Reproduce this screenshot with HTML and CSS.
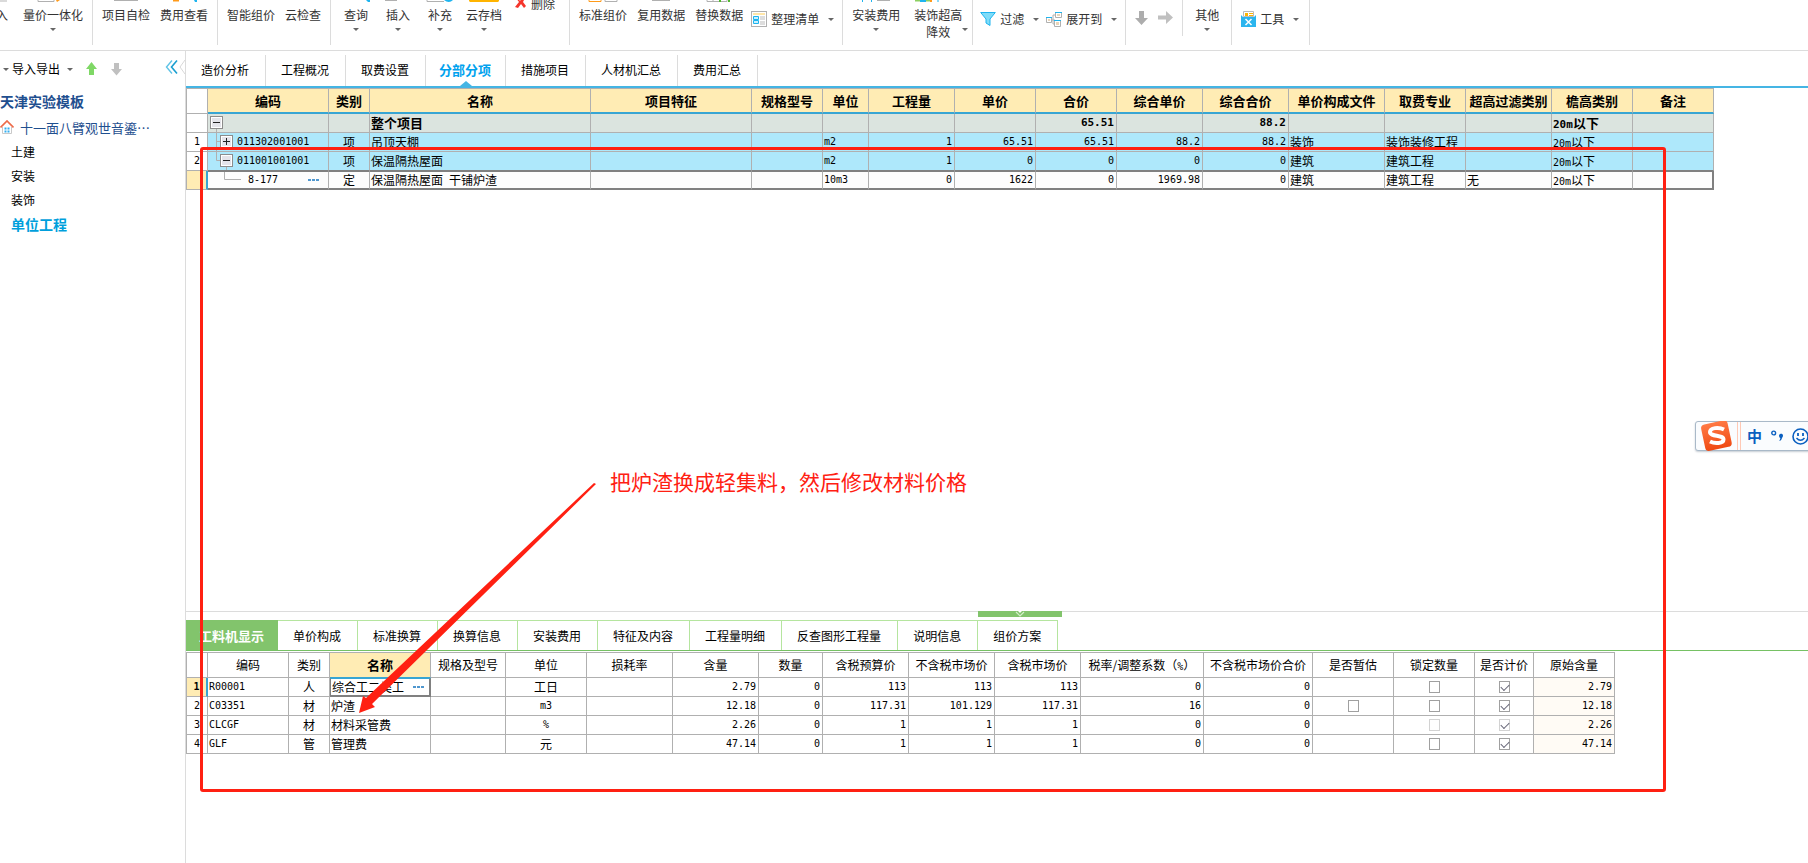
FILE: index.html
```html
<!DOCTYPE html>
<html lang="zh-CN">
<head>
<meta charset="utf-8">
<title>工程计价 - 分部分项</title>
<link rel="stylesheet" href="styles.css">
</head>
<body>
<header class="ribbon">
  <div class="group">
    <button class="tool cut"><svg class="top" width="14" height="4"><path d="M0 1h13" stroke="#b5b5b5" stroke-width="1"/></svg><span>入</span></button>
    <button class="tool"><svg class="top" width="32" height="4"><path d="M1 0v1.500h16V0" fill="none" stroke="#b0b0b0"/><path d="M19 0h4l-3 2z" fill="#ff9a1a"/></svg><span>量价一体化</span><i class="caret"></i></button>
  </div>
  <div class="group">
    <button class="tool"><svg class="top" width="24" height="4"><path d="M0 .5h24" stroke="#b0b0b0"/></svg><span>项目自检</span></button>
    <button class="tool"><svg class="top" width="26" height="4"><path d="M2 0h6v1.500H2z" fill="#ff9a1a"/><path d="M23 0h3v2h-2z" fill="#1eb4ef"/></svg><span>费用查看</span></button>
  </div>
  <div class="group">
    <button class="tool"><span class="top"></span><span>智能组价</span></button>
    <button class="tool"><span class="top"></span><span>云检查</span></button>
  </div>
  <div class="group">
    <button class="tool"><svg class="top" width="28" height="4"><path d="M24 0h4v2h-2z" fill="#1eb4ef"/></svg><span>查询</span><i class="caret"></i></button>
    <button class="tool"><svg class="top" width="28" height="4"><path d="M1 0h12v1H1z" fill="#b0b0b0"/></svg><span>插入</span><i class="caret"></i></button>
    <button class="tool"><svg class="top" width="30" height="4"><path d="M2 0v1.500h17" fill="none" stroke="#b0b0b0"/><path d="M19 0h9q-4 4-9 0z" fill="#1eb4ef"/></svg><span>补充</span><i class="caret"></i></button>
    <button class="tool"><svg class="top" width="30" height="4"><path d="M0 0h30v1l-1 1H1L0 1z" fill="#ffb400"/></svg><span>云存档</span><i class="caret"></i></button>
    <button class="tool delete"><svg width="12" height="12" viewBox="0 0 12 12"><path d="M2 0l3 4-4 5 3 1 3-4 3 4 2-2-3-4 2-4H8L6 3 4 0z" fill="#f5352b"/></svg><span>删除</span></button>
  </div>
  <div class="group">
    <button class="tool"><svg class="top" width="30" height="4"><path d="M1 0v1.500h12V0" fill="none" stroke="#ff9a1a"/><path d="M17 0v1.500h12V0" fill="none" stroke="#b0b0b0"/></svg><span>标准组价</span></button>
    <button class="tool"><svg class="top" width="18" height="4"><path d="M0 .5h18" stroke="#b0b0b0"/></svg><span>复用数据</span></button>
    <button class="tool"><svg class="top" width="30" height="4"><path d="M3 0v1.500h20V0M9 0v1" fill="none" stroke="#b0b0b0"/><path d="M16 0v2M25 0v2" stroke="#4fb92e" stroke-width="2"/></svg><span>替换数据</span></button>
    <button class="tool wide">
      <svg width="16" height="16" viewBox="0 0 16 16"><rect x=".5" y=".5" width="15" height="15" fill="#fff" stroke="#b0b0b0"/><path d="M2 2h12v2H2z" fill="#ffe6a8"/><path d="M2.500 5.500h5v3h-5zM2.500 9.500h5v3h-5z" fill="#c8f1ff" stroke="#1eb4ef"/><path d="M9 5h5v4H9zM9 10h5v4H9z" fill="#ddd"/></svg>
      <span>整理清单</span><i class="caret"></i>
    </button>
  </div>
  <div class="group">
    <button class="tool"><svg class="top" width="28" height="4"><path d="M.5 0v2M9.500 0v2" stroke="#1eb4ef"/><path d="M15 .5h13" stroke="#b0b0b0"/></svg><span>安装费用</span><i class="caret"></i></button>
    <button class="tool twoline"><svg class="top" width="28" height="4"><path d="M1 0h15v1.500H1z" fill="#8ccf62"/><path d="M6 0h6v2H6z" fill="#1eb4ef"/><path d="M16 0h2v2h-2z" fill="#ff9a1a"/><path d="M24 0v2" stroke="#1eb4ef"/></svg><span>装饰超高<br>降效</span><i class="caret"></i></button>
  </div>
  <div class="group">
    <button class="tool wide">
      <svg width="16" height="16" viewBox="0 0 16 16"><path d="M.7 1.500h14.600L10 8v6.500L6 12V8z" fill="#7fdcf8" stroke="#1eb4ef"/></svg>
      <span>过滤</span><i class="caret"></i>
    </button>
    <button class="tool wide">
      <svg width="16" height="16" viewBox="0 0 16 16"><path d="M5 9h4M7 4v9M7 4h3M7 13h2" stroke="#b0b0b0" fill="none"/><path d="M.5 6.500h5v5h-5zM9.500 1.500h6v5h-6zM8.500 9.500h6v6h-6z" fill="#fff" stroke="#b0b0b0"/><path d="M0 6.500h6M9 1.500h7M8 9.500h7" stroke="#1eb4ef"/><path d="M2 8h2v2H2zM11 3h3v2h-3zM10 11h3v3h-3z" fill="#e9d5b8"/></svg>
      <span>展开到</span><i class="caret"></i>
    </button>
  </div>
  <div class="group short">
    <button class="tool wide arrow" aria-label="下移"><svg width="14" height="16" viewBox="0 0 14 16"><path d="M5 1h5v7h4l-6.500 7L1 8h4z" fill="#adadad"/></svg></button>
    <button class="tool wide arrow" aria-label="右移"><svg width="16" height="16" viewBox="0 0 16 16"><path d="M0 5.500h8V1l7 6.500L8 14V9.500H0z" fill="#c0c0c0"/></svg></button>
  </div>
  <div class="group pad">
    <button class="tool"><span class="top"></span><span>其他</span><i class="caret"></i></button>
  </div>
  <div class="group pad-wide">
    <button class="tool wide">
      <svg width="15" height="16" viewBox="0 0 15 16"><path d="M2.500.5h10v5h-10z" fill="#fff" stroke="#bbb"/><path d="M4 2h3v3H4zM8 2h4v1H8zM8 4h4v1H8z" fill="#ffb400"/><path d="M0 4l2 2h11l2-2v12H0z" fill="#2bb5ee"/><path d="M4.500 8l6 6M10.500 8l-6 6" stroke="#fff" stroke-width="1.500"/></svg>
      <span>工具</span><i class="caret"></i>
    </button>
  </div>
</header>

<div class="body">
  <aside class="sidebar">
    <div class="side-tools">
      <button class="plain"><i class="caret"></i><span>导入导出</span><i class="caret far"></i></button>
      <button class="plain" aria-label="上移"><svg width="13" height="14" viewBox="0 0 13 14"><path d="M6.500 0L12 7H9v6H4V7H1z" fill="#7fd866"/></svg></button>
      <button class="plain" aria-label="下移"><svg width="13" height="14" viewBox="0 0 13 14"><path d="M4 1h5v6h3l-5.500 6.500L1 7h3z" fill="#c0c0c0"/></svg></button>
      <button class="plain fold" aria-label="收起"><svg width="20" height="20" viewBox="0 0 20 20"><path d="M7 1.500L1.500 8 7 14.500" fill="none" stroke="#5fc3e6" stroke-width="1.400"/><path d="M12 1.500L6.500 8l5.500 6.500" fill="none" stroke="#1b9fd0" stroke-width="1.600"/><path d="M20 1l-5 7 5 7" fill="none" stroke="#d8d8d8"/></svg></button>
    </div>
    <h1 class="side-title">天津实验模板</h1>
    <a class="project" href="#"><svg width="14" height="15" viewBox="0 0 14 15"><path d="M2.500 7v6.500h9V7" fill="#fff" stroke="#c9c9c9"/><path d="M.5 7.500L7 1l6.500 6.500" fill="none" stroke="#ee6b49" stroke-width="1.700"/><path d="M4.500 7.500h2v2h-2zM7.500 7.500h2v2h-2zM4.500 10.500h2v2h-2zM7.500 10.500h2v2h-2z" fill="#33aef0"/></svg><span>十一面八臂观世音鎏⋯</span></a>
    <nav class="units">
      <a href="#">土建</a>
      <a href="#">安装</a>
      <a href="#">装饰</a>
      <a href="#" class="current">单位工程</a>
    </nav>
  </aside>

  <main class="work">
    <nav class="tabs">
      <button>造价分析</button><button>工程概况</button><button>取费设置</button><button class="active">分部分项</button><button>措施项目</button><button>人材机汇总</button><button>费用汇总</button>
    </nav>

    <section class="upper">
      <table class="grid main-grid">
        <colgroup><col class="w21"><col class="w121"><col class="w41"><col class="w221"><col class="w161"><col class="w71"><col class="w46"><col class="w86"><col class="w81"><col class="w81"><col class="w86"><col class="w86"><col class="w96"><col class="w81"><col class="w86"><col class="w81"><col class="w81"></colgroup>
        <thead>
          <tr><th class="corner"></th><th>编码</th><th>类别</th><th>名称</th><th>项目特征</th><th>规格型号</th><th>单位</th><th>工程量</th><th>单价</th><th>合价</th><th>综合单价</th><th>综合合价</th><th>单价构成文件</th><th>取费专业</th><th>超高过滤类别</th><th>檐高类别</th><th>备注</th></tr>
        </thead>
        <tbody>
          <tr class="total"><th></th><td class="tree"><div><svg width="28" height="18"><rect x="2.500" y="2.500" width="12" height="12" fill="#fff" stroke="#8c8c8c"/><rect x="4" y="4" width="9" height="9" fill="#e4e4ea"/><path d="M5 8.500h7" stroke="#222"/><path d="M8.500 15v3" stroke="#b0b0b0"/></svg></div></td><td></td><td>整个项目</td><td></td><td></td><td></td><td></td><td></td><td class="num">65.51</td><td></td><td class="num">88.2</td><td></td><td></td><td></td><td><span class="mono">20m</span>以下</td><td></td></tr>
          <tr class="item"><th>1</th><td class="tree"><div><svg width="29" height="18"><path d="M8.500 0v18M9 8.500h4" stroke="#b0b0b0"/><rect x="12.500" y="2.500" width="12" height="12" fill="#fff" stroke="#8c8c8c"/><rect x="14" y="4" width="9" height="9" fill="#e4e4ea"/><path d="M15 8.500h7M18.500 5v7" stroke="#222"/></svg><span class="mono">011302001001</span></div></td><td class="mid">项</td><td>吊顶天棚</td><td></td><td></td><td class="mono">m2</td><td class="num">1</td><td class="num">65.51</td><td class="num">65.51</td><td class="num">88.2</td><td class="num">88.2</td><td>装饰</td><td>装饰装修工程</td><td></td><td><span class="mono">20m</span>以下</td><td></td></tr>
          <tr class="item"><th>2</th><td class="tree"><div><svg width="29" height="18"><path d="M8.500 0v8.500H13M18.500 15v3" fill="none" stroke="#b0b0b0"/><rect x="12.500" y="2.500" width="12" height="12" fill="#fff" stroke="#8c8c8c"/><rect x="14" y="4" width="9" height="9" fill="#e4e4ea"/><path d="M15 8.500h7" stroke="#222"/></svg><span class="mono">011001001001</span></div></td><td class="mid">项</td><td>保温隔热屋面</td><td></td><td></td><td class="mono">m2</td><td class="num">1</td><td class="num">0</td><td class="num">0</td><td class="num">0</td><td class="num">0</td><td>建筑</td><td>建筑工程</td><td></td><td><span class="mono">20m</span>以下</td><td></td></tr>
          <tr class="picked"><th></th><td class="tree"><div><svg width="36" height="16"><path d="M16.500 0v7.500H33" fill="none" stroke="#b0b0b0"/></svg><span class="mono">8-177</span><button class="more" aria-label="更多"></button></div></td><td class="mid">定</td><td>保温隔热屋面<span class="mono"> </span>干铺炉渣</td><td></td><td></td><td class="mono">10m3</td><td class="num">0</td><td class="num">1622</td><td class="num">0</td><td class="num">1969.98</td><td class="num">0</td><td>建筑</td><td>建筑工程</td><td>无</td><td><span class="mono">20m</span>以下</td><td></td></tr>
        </tbody>
      </table>
    </section>

    <section class="lower">
      <button class="handle" aria-label="收起面板"><svg width="10" height="6"><path d="M3 0h4L5 2z" fill="#fff"/><path d="M1 1l4 4 4-4" fill="none" stroke="#d5efcb" stroke-width="1.200"/></svg></button>
      <nav class="subtabs">
        <button class="active">工料机显示</button><button>单价构成</button><button>标准换算</button><button>换算信息</button><button>安装费用</button><button>特征及内容</button><button>工程量明细</button><button>反查图形工程量</button><button>说明信息</button><button>组价方案</button>
      </nav>
      <table class="grid detail-grid">
        <colgroup><col class="w21"><col class="w81"><col class="w41"><col class="w101"><col class="w75"><col class="w81"><col class="w86"><col class="w86"><col class="w64"><col class="w86"><col class="w86"><col class="w86"><col class="w123"><col class="w109"><col class="w81"><col class="w81"><col class="w59"><col class="w81"></colgroup>
        <thead>
          <tr><th></th><th>编码</th><th>类别</th><th class="hot">名称</th><th>规格及型号</th><th>单位</th><th>损耗率</th><th>含量</th><th>数量</th><th>含税预算价</th><th>不含税市场价</th><th>含税市场价</th><th>税率/调整系数（<span class="mono">%</span>）</th><th>不含税市场价合价</th><th>是否暂估</th><th>锁定数量</th><th>是否计价</th><th>原始含量</th></tr>
        </thead>
        <tbody>
          <tr><th class="now">1</th><td class="mono">R00001</td><td class="mid">人</td><td class="edit"><div>综合工二类工<button class="more" aria-label="更多"></button></div></td><td></td><td class="mid">工日</td><td></td><td class="num">2.79</td><td class="num">0</td><td class="num">113</td><td class="num">113</td><td class="num">113</td><td class="num">0</td><td class="num">0</td><td></td><td class="mid"><input type="checkbox" aria-label="锁定数量"></td><td class="mid"><input type="checkbox" checked aria-label="是否计价"></td><td class="num orig">2.79</td></tr>
          <tr><th>2</th><td class="mono">C03351</td><td class="mid">材</td><td>炉渣</td><td></td><td class="mid mono">m3</td><td></td><td class="num">12.18</td><td class="num">0</td><td class="num">117.31</td><td class="num">101.129</td><td class="num">117.31</td><td class="num">16</td><td class="num">0</td><td class="mid"><input type="checkbox" aria-label="是否暂估"></td><td class="mid"><input type="checkbox" aria-label="锁定数量"></td><td class="mid"><input type="checkbox" checked aria-label="是否计价"></td><td class="num orig">12.18</td></tr>
          <tr><th>3</th><td class="mono">CLCGF</td><td class="mid">材</td><td>材料采管费</td><td></td><td class="mid mono">%</td><td></td><td class="num">2.26</td><td class="num">0</td><td class="num">1</td><td class="num">1</td><td class="num">1</td><td class="num">0</td><td class="num">0</td><td></td><td class="mid"><input type="checkbox" disabled aria-label="锁定数量"></td><td class="mid"><input type="checkbox" checked disabled aria-label="是否计价"></td><td class="num orig">2.26</td></tr>
          <tr><th>4</th><td class="mono">GLF</td><td class="mid">管</td><td>管理费</td><td></td><td class="mid">元</td><td></td><td class="num">47.14</td><td class="num">0</td><td class="num">1</td><td class="num">1</td><td class="num">1</td><td class="num">0</td><td class="num">0</td><td></td><td class="mid"><input type="checkbox" aria-label="锁定数量"></td><td class="mid"><input type="checkbox" checked aria-label="是否计价"></td><td class="num orig">47.14</td></tr>
        </tbody>
      </table>
    </section>
  </main>
</div>

<div class="mark-box"></div>
<svg class="mark-arrow" width="240" height="232" viewBox="0 0 240 232"><path d="M239 1L237 0 9 215l-3-2-4 17 16-6-3-3z" fill="#ff2012"/></svg>
<p class="mark-text">把炉渣换成轻集料，然后修改材料价格</p>

<div class="ime">
  <svg width="32" height="30" viewBox="0 0 32 30"><defs><linearGradient id="g" x1="0" y1="0" x2="0" y2="1"><stop offset="0" stop-color="#ff7a45"/><stop offset="1" stop-color="#f04a12"/></linearGradient></defs><rect x="2" y="1" width="27" height="27" rx="4" fill="url(#g)" transform="rotate(-12 16 15)"/><path d="M23 8.500C18 6 9 6.500 9 11c0 5 13.500 2.500 13.500 7.500 0 4-8.500 4.500-13.500 2" fill="none" stroke="#fff" stroke-width="4"/></svg>
  <span class="ime-rule"></span>
  <button>中</button>
  <svg width="12" height="14" viewBox="0 0 12 14"><circle cx="2.700" cy="4" r="1.900" fill="none" stroke="#0a5fc0" stroke-width="1.400"/><path d="M8 6.500a2 2 0 1 1 3.500 1.500q-.5 3-3.500 4 1.500-1.500 1.300-3Q8 8.500 8 6.500z" fill="#0a5fc0"/></svg>
  <svg width="17" height="17" viewBox="0 0 17 17"><circle cx="8.500" cy="8.500" r="7.500" fill="none" stroke="#0a5fc0" stroke-width="1.600"/><path d="M6 5v3M11 5v3" stroke="#0a5fc0" stroke-width="1.800"/><path d="M4.500 10q4 4.500 8 0" fill="none" stroke="#0a5fc0" stroke-width="1.500"/></svg>
</div>
</body>
</html>
```
FILE: styles.css
```css
* { box-sizing: border-box; }
body {
  margin: 0;
  min-height: 100vh;
  display: flex;
  flex-direction: column;
  position: relative;
  overflow: hidden;
  background: #fff;
  color: #000;
  font: 12px/18px "Noto Sans CJK SC", sans-serif;
}
button {
  font: inherit;
  color: inherit;
  background: none;
  border: 0;
  padding: 0;
  white-space: nowrap;
}
a { color: inherit; text-decoration: none; }
svg { display: block; flex: none; }
.mono { font-family: "DejaVu Sans Mono", monospace; font-size: 10px; }
span.mono { line-height: 10px; }

/* ribbon */
.ribbon {
  display: flex;
  align-items: flex-start;
  height: 51px;
  border-bottom: 1px solid #dcdcdc;
  color: #333;
}
.group {
  display: flex;
  align-items: flex-start;
  height: 45px;
  padding: 0 4px;
  border-right: 1px solid #dcdcdc;
}
.group:first-child { padding-left: 0; }
.group.short { height: 36px; padding: 0 5px 0 2px; }
.group.pad { padding: 0 3px; }
.group.pad-wide { padding: 0 6px; }
.tool {
  display: flex;
  flex-direction: column;
  align-items: center;
  min-width: 42px;
  padding: 0 5px;
}
.top { height: 4px; margin-bottom: 2px; }
.caret {
  width: 6px;
  border: solid transparent;
  border-width: 3px 3px 0;
  border-top-color: #666;
}
.tool .caret { margin-top: 4px; }
.tool.cut {
  min-width: 18px;
  width: 18px;
  padding: 0 10px 0 0;
  align-items: flex-end;
}
.tool.delete {
  flex-direction: row;
  gap: 5px;
  align-items: center;
  margin-top: -5px;
  padding: 0 10px 0 7px;
}
.tool.wide {
  flex-direction: row;
  gap: 4px;
  padding: 10px 3px 0;
}
.tool.wide .caret { margin: 0 1px 0 5px; }
.tool.arrow { min-width: 24px; padding-left: 6px; }
.tool.twoline {
  display: grid;
  grid-template-columns: auto 6px;
  padding: 0 0 0 9px;
  line-height: 17px;
}
.tool.twoline .top { grid-column: 1 / 3; }
.tool.twoline .caret { margin: 12px 0 0; }

/* frame */
.body { flex: 1; display: flex; }
.sidebar {
  flex: 0 0 186px;
  border-right: 1px solid #dcdcdc;
}
.side-tools {
  display: flex;
  align-items: center;
  height: 36px;
  padding-left: 3px;
  gap: 12px;
}
.plain { display: flex; align-items: center; gap: 3px; }
.plain .far { margin-left: 4px; }
.plain.fold { margin-left: auto; }
.side-title {
  margin: 0;
  font-size: 14px;
  line-height: 28px;
  color: #1f4f8f;
}
.project {
  display: flex;
  align-items: center;
  gap: 6px;
  height: 25px;
  font-size: 13px;
  color: #1f4f8f;
  white-space: nowrap;
}
.units { display: flex; flex-direction: column; padding-left: 11px; line-height: 24px; }
.units .current { font-size: 14px; font-weight: 700; color: #009fdc; }
.work { flex: 1; min-width: 0; display: flex; flex-direction: column; }

.tabs {
  display: flex;
  height: 37px;
  padding-top: 4px;
  border-bottom: 2px solid #45b5e4;
}
.tabs button {
  position: relative;
  padding: 0 16px 2px 15px;
  border-right: 1px solid #dcdcdc;
}
.tabs .active { padding: 0 14px 2px 13px; font-size: 13px; font-weight: 700; color: #00a2ee; }
.tabs .active::after {
  content: "";
  position: absolute;
  left: 34px;
  bottom: 0;
  border: solid transparent;
  border-width: 0 6px 5px;
  border-bottom-color: #45b5e4;
}

/* grids */
.upper { flex: 1; }
.grid {
  table-layout: fixed;
  width: 0;
  border-spacing: 0;
  border: solid #b0b0b0;
  border-width: 1px 0 0 1px;
  line-height: 18px;
}
.grid th, .grid td {
  height: 19px;
  padding: 0 1px;
  border: solid #b0b0b0;
  border-width: 0 1px 1px 0;
  white-space: nowrap;
  overflow: hidden;
  text-align: left;
  font-weight: 400;
}
.grid thead th { height: 25px; padding: 0; text-align: center; }
.grid tbody th { padding: 0; text-align: center; font-family: "DejaVu Sans Mono", monospace; font-size: 10px; }
.grid .mid { text-align: center; }
.grid .num { padding-right: 2px; text-align: right; font-family: "DejaVu Sans Mono", monospace; font-size: 10px; }
.main-grid thead th {
  font-size: 13px;
  font-weight: 700;
  background: #ffecb4;
  border-bottom: 2px solid #38a5d3;
}
.main-grid .corner { background: #fff; border-bottom: 1px solid #b0b0b0; }
.grid .tree { padding: 0; }
.tree div, .edit div { display: flex; align-items: center; }
.grid .total td { background: #dbe4df; font-size: 13px; font-weight: 700; }
.grid .total .num, .total .mono { font-size: 11px; }
.item td { background: #aee8fb; }
.grid .item:nth-child(3) td { border-bottom-color: #808080; }
.picked td { background: #fdfdfd; }
.grid .picked td { height: 19px; border-top: 1px solid #808080; border-bottom: 2px solid #808080; line-height: 16px; }
.grid .picked td:last-child { border-right: 2px solid #808080; }
.picked .tree .mono { padding-left: 4px; line-height: 16px; }
.grid .picked th, .grid th.now { background: #ffecb4; border-right: 2px solid #38a5d3; font-weight: 700; line-height: 16px; }
.more {
  width: 11px;
  height: 2px;
  margin: 0 9px 0 auto;
  background: repeating-linear-gradient(90deg, #4f97cf 0 3px, transparent 3px 4px);
}
.edit .more { margin-right: 4px; }
.grid .hot { background: #ffecb4; font-size: 13px; font-weight: 700; border-bottom-color: #38a5d3; }
.grid .edit { border: solid #808080; border-width: 1px 2px 2px 1px; border-top-color: #38a5d3; line-height: 16px; }
.orig { background: #fffbf5; }
.grid input {
  appearance: none;
  display: block;
  width: 11px;
  height: 12px;
  margin: 0 auto;
  border: 1px solid #a0a0a0;
  background: #fff;
}
.grid input:checked::after {
  content: "";
  display: block;
  width: 7px;
  height: 4px;
  margin: 2px 1px;
  border: solid #667;
  border-width: 0 0 1px 1px;
  rotate: -45deg;
}
.grid input:disabled { border-color: #d2d2d2; }

.w21 { width: 21px; } .w41 { width: 41px; } .w46 { width: 46px; } .w59 { width: 59px; }
.w64 { width: 64px; } .w71 { width: 71px; } .w75 { width: 75px; } .w81 { width: 81px; }
.w86 { width: 86px; } .w96 { width: 96px; } .w101 { width: 101px; } .w109 { width: 109px; }
.w121 { width: 121px; } .w123 { width: 123px; } .w161 { width: 161px; } .w221 { width: 221px; }

/* lower pane */
.lower { min-height: 252px; border-top: 1px solid #dcdcdc; }
.handle {
  display: flex;
  justify-content: center;
  width: 84px;
  height: 6px;
  margin: -1px 0 3px 792px;
  background: #82c46c;
}
.subtabs {
  display: flex;
  height: 31px;
  margin-bottom: 1px;
  border-bottom: 1px solid #76c164;
}
.subtabs button {
  padding: 0 16px 0 15px;
  border: solid #b5e59f;
  border-width: 1px 1px 0 0;
}
.subtabs .active {
  padding: 0 13px;
  background: #82c46c;
  border-color: #82c46c;
  color: #fff;
  font-size: 13px;
  font-weight: 700;
}

/* mark-up drawn over the window */
.mark-box {
  position: absolute;
  left: 200px;
  top: 147px;
  width: 1466px;
  height: 645px;
  border: 3px solid #ff2012;
  border-radius: 3px;
  pointer-events: none;
}
.mark-arrow { position: absolute; left: 357px; top: 483px; pointer-events: none; }
.mark-text {
  position: absolute;
  left: 610px;
  top: 466px;
  margin: 0;
  font-size: 21px;
  line-height: 30px;
  color: #ff2012;
  white-space: nowrap;
}
.ime {
  position: absolute;
  right: -8px;
  top: 421px;
  display: flex;
  align-items: center;
  width: 121px;
  height: 30px;
  padding-left: 5px;
  gap: 9px;
  border: 1px solid #a9b9c8;
  border-radius: 3px;
  background: #fafcfe;
  box-shadow: 0 1px 2px #c5ccd3;
}
.ime-rule {
  width: 4px;
  height: 28px;
  margin: 0 -3px 0 -5px;
  border: solid #ffc9b5;
  border-width: 0 1px;
}
.ime button { font-size: 15px; font-weight: 700; color: #0a5fc0; }
```
